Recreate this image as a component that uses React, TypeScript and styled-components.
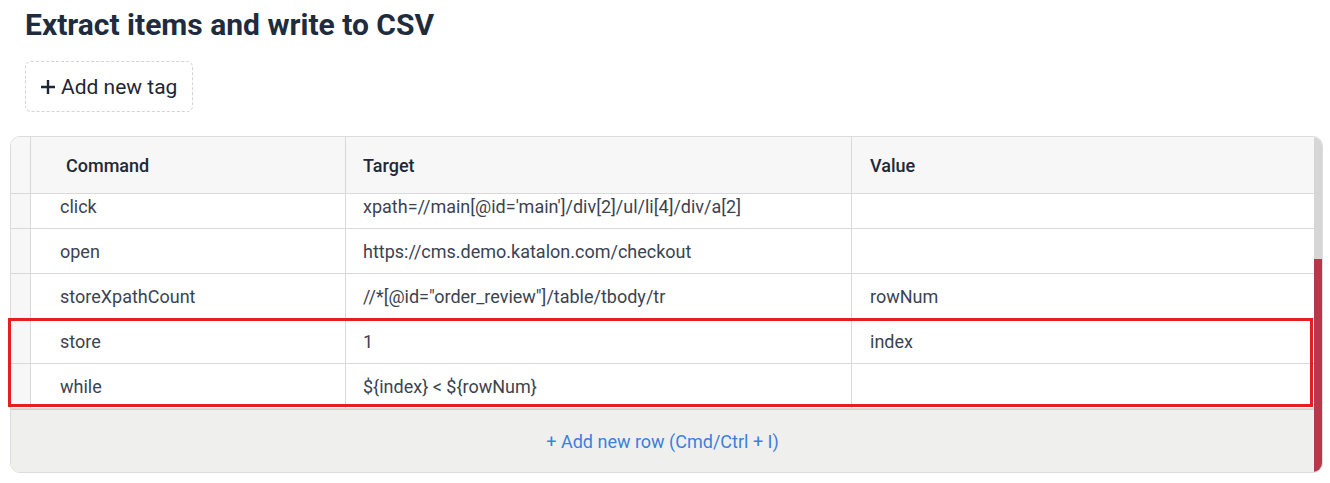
import styled, { createGlobalStyle } from 'styled-components';

type Step = {
  command: string;
  target: string;
  value: string;
};

const steps: Step[] = [
  { command: 'click', target: "xpath=//main[@id='main']/div[2]/ul/li[4]/div/a[2]", value: '' },
  { command: 'open', target: 'https://cms.demo.katalon.com/checkout', value: '' },
  { command: 'storeXpathCount', target: '//*[@id="order_review"]/table/tbody/tr', value: 'rowNum' },
  { command: 'store', target: '1', value: 'index' },
  { command: 'while', target: '${index} < ${rowNum}', value: '' },
];

const GlobalStyle = createGlobalStyle`
  body {
    margin: 0;
    background: #fff;
    font-family: Roboto, "Liberation Sans", Arial, sans-serif;
  }
  * {
    box-sizing: border-box;
  }
`;

const Page = styled.div`
  padding: 7px 7px 10px 10px;
`;

const Header = styled.div`
  padding-left: 15px;
`;

const Title = styled.h1`
  margin: 0;
  font-size: 30px;
  font-weight: 700;
  line-height: 36px;
  color: #1f2c3d;
`;

const TagButton = styled.button`
  margin-top: 18px;
  height: 51px;
  padding: 0 15px 0 14px;
  border: 1px dashed #d2d4d8;
  border-radius: 6px;
  background: #fff;
  font-family: inherit;
  font-size: 21px;
  color: #1f2633;
  display: flex;
  align-items: center;
  gap: 5px;
`;

const TableWrap = styled.div`
  position: relative;
  margin-top: 24px;
`;

const Table = styled.div`
  border: 1px solid #dcdcdc;
  border-radius: 10px;
  overflow: hidden;
  display: flex;
  height: 337px;
`;

const Main = styled.div`
  flex: 1;
  display: flex;
  flex-direction: column;
`;

const Row = styled.div<{ $head?: boolean }>`
  display: grid;
  grid-template-columns: 20px 315px 506px 1fr;
  height: ${(p) => (p.$head ? '57px' : '45px')};
  background: ${(p) => (p.$head ? '#f7f7f7' : '#fff')};
  border-bottom: 1px solid #d9d9d9;
  flex-shrink: 0;
`;

const Cell = styled.div<{ $pad: number; $head?: boolean }>`
  display: flex;
  align-items: center;
  padding-left: ${(p) => p.$pad}px;
  border-right: 1px solid #d9d9d9;
  font-size: 18px;
  font-weight: ${(p) => (p.$head ? 500 : 400)};
  color: ${(p) => (p.$head ? '#1d2939' : '#3b4351')};
  white-space: nowrap;
  &:last-child {
    border-right: none;
  }
`;

const Gutter = styled.div`
  background: #f7f7f7;
  border-right: 1px solid #d9d9d9;
`;

const Body = styled.div`
  height: 215px;
  overflow: hidden;
  flex-shrink: 0;
`;

const Scrolled = styled.div`
  margin-top: -10px;
`;

const Footer = styled.div`
  flex: 1;
  background: #eff0ee;
  border-top: 1px solid #cfcfcf;
  display: flex;
  align-items: center;
  justify-content: center;
  font-size: 18px;
  color: #3c7fe0;
`;

const Scrollbar = styled.div`
  width: 8px;
  background: #d6d6d6;
  display: flex;
  flex-direction: column;
`;

const Thumb = styled.div`
  margin-top: auto;
  height: 213px;
  background: #b7384b;
`;

/* annotation drawn over the store / while rows */
const Marker = styled.div`
  position: absolute;
  top: 182px;
  left: -2px;
  width: 1305px;
  height: 89px;
  border: 3px solid #e31e25;
  pointer-events: none;
`;

export default function App() {
  return (
    <>
      <GlobalStyle />
      <Page>
        <Header>
          <Title>Extract items and write to CSV</Title>
          <TagButton>
            <svg width="16" height="16" viewBox="0 0 16 16">
              <path d="M8 1v14M1 8h14" stroke="#1f2633" strokeWidth="2.4" />
            </svg>
            Add new tag
          </TagButton>
        </Header>
        <TableWrap>
          <Table>
            <Main>
              <Row $head>
                <Gutter />
                <Cell $pad={35} $head>Command</Cell>
                <Cell $pad={17} $head>Target</Cell>
                <Cell $pad={18} $head>Value</Cell>
              </Row>
              <Body>
                <Scrolled>
                  {steps.map((s) => (
                    <Row key={s.command}>
                      <Gutter />
                      <Cell $pad={29}>{s.command}</Cell>
                      <Cell $pad={17}>{s.target}</Cell>
                      <Cell $pad={18}>{s.value}</Cell>
                    </Row>
                  ))}
                </Scrolled>
              </Body>
              <Footer>+ Add new row (Cmd/Ctrl + I)</Footer>
            </Main>
            <Scrollbar>
              <Thumb />
            </Scrollbar>
          </Table>
          <Marker />
        </TableWrap>
      </Page>
    </>
  );
}
